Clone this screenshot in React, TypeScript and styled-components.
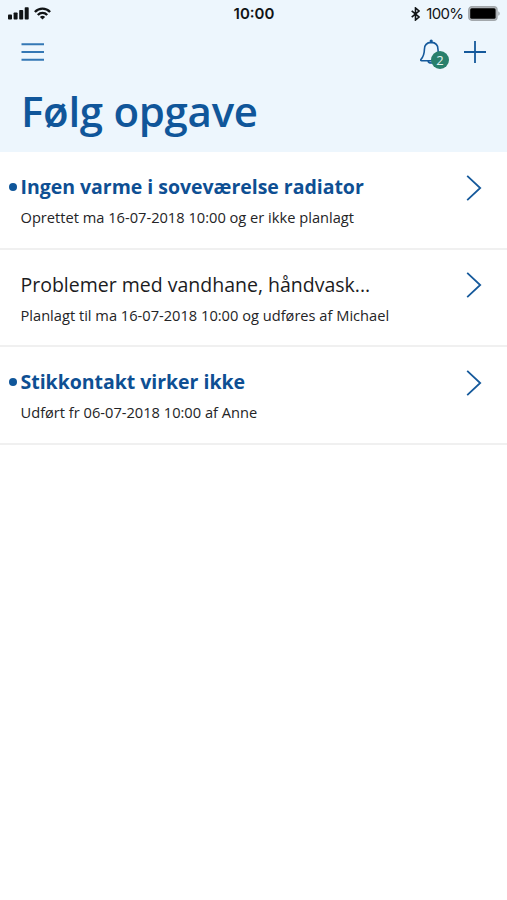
import React from "react";
import styled, { createGlobalStyle } from "styled-components";

const GlobalStyle = createGlobalStyle`
  * { box-sizing: border-box; }
  html, body { margin: 0; background: #fff; }
  body { font-family: "Open Sans", "Noto Sans", sans-serif; color: #1c1c1e; }
`;

const Screen = styled.main`
  display: flex;
  flex-direction: column;
  width: 507px;
  height: 900px;
  overflow: hidden;
  background: #fff;
`;

const Header = styled.header`
  flex: none;
  height: 152px;
  background: #edf6fd;
`;

const StatusBar = styled.div`
  display: grid;
  grid-template-columns: 1fr auto 1fr;
  align-items: center;
  height: 27px;
  padding: 0 7px 0 8px;
  font-family: Inter, "Liberation Sans", sans-serif;
  color: #111416;
`;

const StatusGroup = styled.div<{ $end?: boolean }>`
  display: flex;
  align-items: center;
  justify-content: ${(p) => (p.$end ? "flex-end" : "flex-start")};
  gap: 4.5px;
`;

const Clock = styled.span`
  font-size: 15px;
  line-height: 27px;
  font-weight: 600;
`;

const Percent = styled.span`
  margin-left: 2px;
  font-size: 15px;
  line-height: 27px;
  letter-spacing: -0.6px;
`;

const NavBar = styled.nav`
  display: flex;
  align-items: center;
  justify-content: space-between;
  height: 50px;
  padding: 0 21px 0 21px;
`;

const Actions = styled.div`
  display: flex;
  align-items: center;
  gap: 16px;
`;

const IconButton = styled.button`
  display: flex;
  position: relative;
  padding: 0;
  border: 0;
  background: none;
  color: #15599b;
`;

const Badge = styled.span`
  position: absolute;
  left: 11px;
  top: 13px;
  width: 18px;
  height: 18px;
  border-radius: 50%;
  background: #29806c;
  color: #e4f4f0;
  font-family: "Open Sans", sans-serif;
  font-size: 13px;
  line-height: 18px;
  text-align: center;
`;

const PageTitle = styled.h1`
  margin: 5px 0 0 21px;
  font-size: 42px;
  line-height: 57px;
  font-weight: 600;
  letter-spacing: -0.3px;
  color: #10569a;
`;

const TaskList = styled.ul`
  margin: 0;
  padding: 0;
  list-style: none;
`;

const TaskItem = styled.li`
  display: grid;
  grid-template-columns: 20.5px 1fr 16px;
  height: 97.7px;
  padding: 21px 25px 0 0;
  border-bottom: 2px solid #f0f0f0;
`;

const UnreadDot = styled.span<{ $visible: boolean }>`
  width: 8px;
  height: 8px;
  margin: 9.5px 0 0 9px;
  border-radius: 50%;
  background: ${(p) => (p.$visible ? "#10569a" : "transparent")};
`;

const TaskTitle = styled.h2<{ $unread: boolean }>`
  margin: 0;
  font-size: 19.5px;
  line-height: 27.8px;
  white-space: nowrap;
  font-weight: ${(p) => (p.$unread ? 700 : 400)};
  color: ${(p) => (p.$unread ? "#0e4f93" : "#1c1c1e")};
  letter-spacing: ${(p) => (p.$unread ? "-0.03px" : "0")};
`;

const TaskStatus = styled.p`
  margin: 6.2px 0 0;
  font-size: 14.65px;
  line-height: 20px;
  white-space: nowrap;
  color: #242426;
`;

const Chevron = styled.svg`
  margin-top: 1.6px;
  color: #15599b;
`;

const tasks = [
  {
    title: "Ingen varme i soveværelse radiator",
    status: "Oprettet ma 16-07-2018 10:00 og er ikke planlagt",
    unread: true,
  },
  {
    title: "Problemer med vandhane, håndvask...",
    status: "Planlagt til ma 16-07-2018 10:00 og udføres af Michael",
    unread: false,
  },
  {
    title: "Stikkontakt virker ikke",
    status: "Udført fr 06-07-2018 10:00 af Anne",
    unread: true,
  },
];

const SignalIcon = () => (
  <svg width="21" height="13" viewBox="0 0 21 13" fill="currentColor">
    <rect x="0" y="7.5" width="4" height="5" rx="0.8" />
    <rect x="5.6" y="5.5" width="4" height="7" rx="0.8" />
    <rect x="11.2" y="3" width="4" height="9.5" rx="0.8" />
    <rect x="16.7" y="0.3" width="4" height="12.2" rx="0.8" />
  </svg>
);

const WifiIcon = () => (
  <svg width="17" height="13" viewBox="0 0 17 13" fill="none" stroke="currentColor" strokeWidth="2.4">
    <path d="M0.9 5C5.2 0.5 11.8 0.5 16.1 5" />
    <path d="M3.8 8C6.5 5.2 10.5 5.2 13.2 8" />
    <path d="M8.5 12.6L5.9 9.9C7.4 8.5 9.6 8.5 11.1 9.9Z" fill="currentColor" stroke="none" />
  </svg>
);

const BluetoothIcon = () => (
  <svg width="9" height="14" viewBox="0 0 9 14" fill="none" stroke="currentColor" strokeWidth="1.6">
    <path d="M0.7 3.8L8 10L4.5 13V1L8 4L0.7 10.2" />
  </svg>
);

const BatteryIcon = () => (
  <svg width="32" height="15" viewBox="0 0 32 15">
    <rect x="0.8" y="0.8" width="28.2" height="13.4" rx="3" fill="#b4b9bd" stroke="#a3a8ac" strokeWidth="1.4" />
    <rect x="2.2" y="2.3" width="25.4" height="10.4" rx="1.5" fill="#000" />
    <path d="M30.4 5.2C32 6 32 9 30.4 9.8Z" fill="#92989d" />
  </svg>
);

const MenuIcon = () => (
  <svg width="24" height="20" viewBox="0 0 24 20" stroke="#3478b5" strokeWidth="2">
    <path d="M0.5 2.3H23M0.5 10H23M0.5 17.7H23" />
  </svg>
);

const BellIcon = () => (
  <svg width="28" height="28" viewBox="0 0 28 28" fill="none" stroke="currentColor" strokeWidth="1.6">
    <path d="M11.2 4.4C7 4.6 4.4 7.4 4.4 11.4C4.4 17 2.6 19.4 0.9 21.5C0.4 22.3 0.8 22.8 1.6 22.8H20.8C21.6 22.8 22 22.3 21.5 21.5C19.8 19.4 18 17 18 11.4C18 7.4 15.4 4.6 11.2 4.4Z" />
    <path d="M8 23C8.8 25.7 13.6 25.7 14.4 23" />
    <circle cx="11.2" cy="3" r="1.6" fill="currentColor" stroke="none" />
  </svg>
);

const PlusIcon = () => (
  <svg width="22" height="22" viewBox="0 0 22 22" stroke="currentColor" strokeWidth="1.8">
    <path d="M0 11H22M11 0V22" />
  </svg>
);

export default function App() {
  return (
    <Screen>
      <GlobalStyle />
      <Header>
        <StatusBar>
          <StatusGroup>
            <SignalIcon />
            <WifiIcon />
          </StatusGroup>
          <Clock>10:00</Clock>
          <StatusGroup $end>
            <BluetoothIcon />
            <Percent>100%</Percent>
            <BatteryIcon />
          </StatusGroup>
        </StatusBar>
        <NavBar>
          <IconButton aria-label="Menu">
            <MenuIcon />
          </IconButton>
          <Actions>
            <IconButton aria-label="Notifikationer">
              <BellIcon />
              <Badge>2</Badge>
            </IconButton>
            <IconButton aria-label="Ny opgave">
              <PlusIcon />
            </IconButton>
          </Actions>
        </NavBar>
        <PageTitle>Følg opgave</PageTitle>
      </Header>
      <TaskList>
        {tasks.map((t) => (
          <TaskItem key={t.title}>
            <UnreadDot $visible={t.unread} />
            <div>
              <TaskTitle $unread={t.unread}>{t.title}</TaskTitle>
              <TaskStatus>{t.status}</TaskStatus>
            </div>
            <Chevron width="16" height="26" viewBox="0 0 16 26" fill="none" stroke="currentColor" strokeWidth="1.8">
              <path d="M1.2 0.8L14.2 13L1.2 25.2" />
            </Chevron>
          </TaskItem>
        ))}
      </TaskList>
    </Screen>
  );
}
